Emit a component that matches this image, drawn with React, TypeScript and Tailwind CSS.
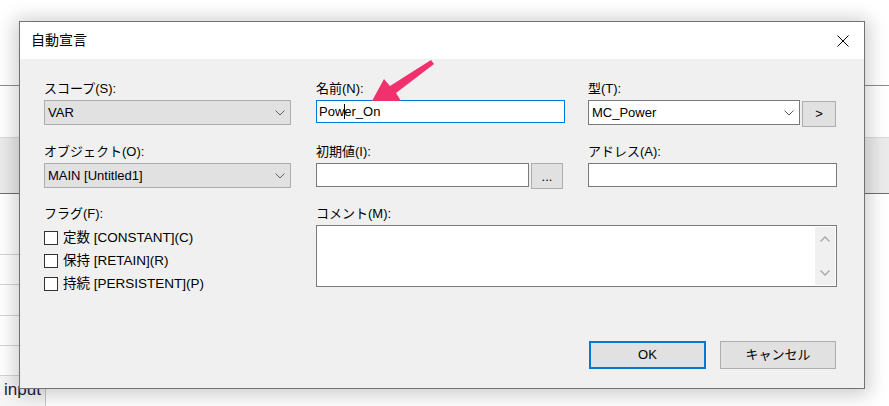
import React from 'react';

const FONT = "font-['Liberation_Sans','Noto_Sans_CJK_JP',sans-serif]";

function Chevron() {
  return (
    <svg width="10" height="6" viewBox="0 0 10 6" className="shrink-0">
      <path d="M0.5 0.5 L5 5 L9.5 0.5" fill="none" stroke="#606060" strokeWidth="1" />
    </svg>
  );
}

function Label({ children }: { children: React.ReactNode }) {
  return <div className="h-[16px] text-[13px] leading-[16px] text-black whitespace-nowrap">{children}</div>;
}

function Combo({ value, white, width }: { value: string; white?: boolean; width: string }) {
  return (
    <div
      className={`${width} mt-[3px] flex h-[25px] items-center justify-between border pl-[3px] pr-[5px] text-[13px] text-black ${
        white ? 'border-[#7a7a7a] bg-white' : 'border-[#adadad] bg-[#e1e1e1]'
      }`}
    >
      <span>{value}</span>
      <Chevron />
    </div>
  );
}

function Check({ label }: { label: string }) {
  return (
    <div className="flex h-[23px] items-start gap-[5px] text-[13.5px] leading-[15px] text-black">
      <div className="h-[14px] w-[14px] border border-[#333333] bg-white" />
      <span className="-mt-px">{label}</span>
    </div>
  );
}

export default function App() {
  return (
    <div className={`relative h-[406px] w-[889px] overflow-hidden bg-white ${FONT}`}>
      {/* page behind the dialog */}
      <div className="flex flex-col">
        <div className="h-[86px] border-b border-[#8c8c8c]" />
        <div className="h-[51px]" />
        <div className="h-[57px] border-t border-b border-t-[#d9d9d9] border-b-[#6e6e6e] bg-[#ebebeb]" />
        <div className="h-[61px] w-[300px] border-b border-[#d4d4d4]" />
        <div className="h-[30px] w-[300px] border-b border-[#d4d4d4]" />
        <div className="h-[31px] w-[300px] border-b border-[#d4d4d4]" />
        <div className="h-[30px] w-[300px] border-b border-[#d4d4d4]" />
        <div className="h-[30px] w-[300px] border-b border-[#d4d4d4]" />
        <div className="flex h-[31px]">
          <div className="w-[46px] border-r border-[#c8c8c8] bg-[#f6f6f6] pl-[4px] pt-[5px] text-[17px] leading-[18px] text-[#1c1c44]">
            input
          </div>
        </div>
      </div>

      {/* dialog */}
      <div className="absolute left-[19px] top-[21px] flex h-[368px] w-[846px] flex-col border border-[#727272] bg-[#f0f0f0] shadow-[0_2px_18px_4px_rgba(0,0,0,0.2)]">
        <div className="flex h-[37px] shrink-0 items-center justify-between bg-white pl-[11px] pr-[15px]">
          <span className="text-[14px] text-black">自動宣言</span>
          <svg width="12" height="12" viewBox="0 0 12 12">
            <path d="M0.5 0.5 L11.5 11.5 M11.5 0.5 L0.5 11.5" stroke="#000" strokeWidth="1" />
          </svg>
        </div>

        <div className="flex flex-1 flex-col">
          <div className="grid grid-cols-[272px_272px_249px] grid-rows-[63px_62px_auto] pl-[24px] pt-[22px]">
            {/* row 1 */}
            <div className="flex flex-col">
              <Label>スコープ(S):</Label>
              <Combo value="VAR" width="w-[247px]" />
            </div>
            <div className="flex flex-col">
              <Label>名前(N):</Label>
              <div className="mt-[3px] flex h-[23px] w-[249px] items-center border border-[#0078d7] bg-white pl-[2px] text-[13px] text-black">
                Pow
                <span className="-mr-px inline-block h-[15px] w-px bg-black" />
                er_On
              </div>
            </div>
            <div className="flex flex-col">
              <Label>型(T):</Label>
              <div className="flex items-start gap-[2px]">
                <Combo value="MC_Power" white width="w-[212px]" />
                <div className="mt-[4px] flex h-[26px] w-[34px] items-center justify-center border border-[#adadad] bg-[#e1e1e1] text-[13px] text-black">
                  &gt;
                </div>
              </div>
            </div>

            {/* row 2 */}
            <div className="flex flex-col">
              <Label>オブジェクト(O):</Label>
              <Combo value="MAIN [Untitled1]" width="w-[247px]" />
            </div>
            <div className="flex flex-col">
              <Label>初期値(I):</Label>
              <div className="mt-[3px] flex items-start gap-[2px]">
                <div className="h-[24px] w-[213px] border border-[#7a7a7a] bg-white" />
                <div className="flex h-[26px] w-[32px] items-end justify-center border border-[#adadad] bg-[#e1e1e1] pb-[5px] text-[13px] leading-[13px] text-black">
                  ...
                </div>
              </div>
            </div>
            <div className="flex flex-col">
              <Label>アドレス(A):</Label>
              <div className="mt-[3px] h-[24px] w-[249px] border border-[#7a7a7a] bg-white" />
            </div>

            {/* row 3 */}
            <div className="flex flex-col">
              <Label>フラグ(F):</Label>
              <div className="mt-[9px] flex flex-col">
                <Check label="定数 [CONSTANT](C)" />
                <Check label="保持 [RETAIN](R)" />
                <Check label="持続 [PERSISTENT](P)" />
              </div>
            </div>
            <div className="col-span-2 flex flex-col">
              <Label>コメント(M):</Label>
              <div className="mt-[3px] flex h-[62px] w-[521px] justify-end border border-[#7a7a7a] bg-white">
                <div className="my-px mr-px flex w-[20px] flex-col items-center justify-between bg-[#f0f0f0] py-[9px]">
                  <svg width="10" height="6" viewBox="0 0 10 6">
                    <path d="M0.5 5.5 L5 1 L9.5 5.5" fill="none" stroke="#a6a6a6" strokeWidth="1.3" />
                  </svg>
                  <svg width="10" height="6" viewBox="0 0 10 6">
                    <path d="M0.5 0.5 L5 5 L9.5 0.5" fill="none" stroke="#a6a6a6" strokeWidth="1.3" />
                  </svg>
                </div>
              </div>
            </div>
          </div>

          <div className="mt-auto flex justify-end gap-[14px] pb-[19px] pr-[28px]">
            <div className="flex h-[28px] w-[117px] items-center justify-center border-2 border-[#0078d7] bg-[#e1e1e1] text-[13px] text-black">
              OK
            </div>
            <div className="flex h-[28px] w-[116px] items-center justify-center border border-[#adadad] bg-[#e1e1e1] text-[13px] text-black">
              キャンセル
            </div>
          </div>
        </div>
      </div>

      {/* annotation arrow */}
      <svg className="pointer-events-none absolute left-0 top-0" width="889" height="406" viewBox="0 0 889 406">
        <polygon points="372,101 384,79 390,86 431,60 434,64 396,93 401,101" fill="#f2306d" />
      </svg>
    </div>
  );
}
